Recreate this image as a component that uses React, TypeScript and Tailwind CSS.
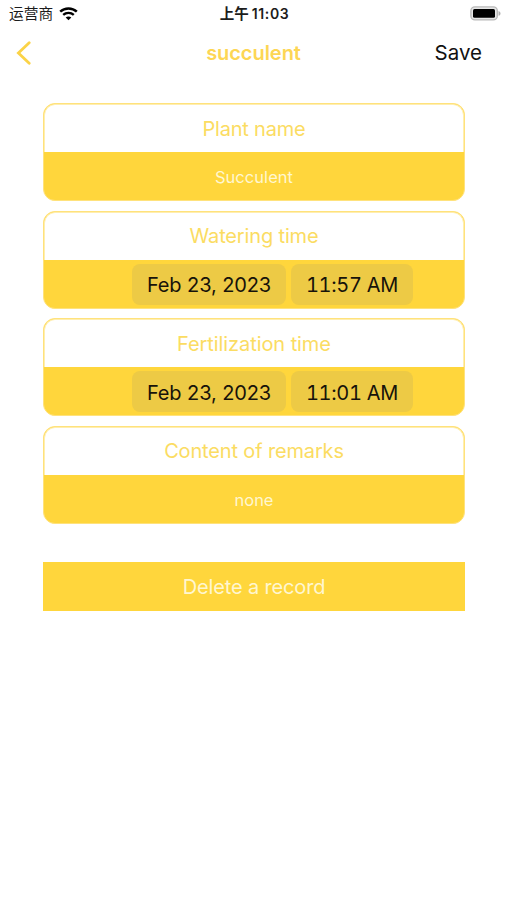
import React from "react";

interface Field {
  label: string;
  labelClass: string;
  value?: string;
  valueClass?: string;
  date?: string;
  time?: string;
}

const fields: Field[] = [
  { label: "Plant name", labelClass: "tracking-[-0.2px]", value: "Succulent", valueClass: "tracking-[0.05px]" },
  { label: "Watering time", labelClass: "tracking-[-0.15px]", date: "Feb 23, 2023", time: "11:57 AM" },
  { label: "Fertilization time", labelClass: "tracking-[-0.08px]", date: "Feb 23, 2023", time: "11:01 AM" },
  { label: "Content of remarks", labelClass: "tracking-[-0.15px]", value: "none", valueClass: "tracking-[-0.05px]" },
];

function StatusBar() {
  return (
    <div className="grid h-[27px] grid-cols-3 items-center pl-[9px] pr-[6px] text-[14px] text-[#1c1c1c]">
      <div className="flex items-center gap-[6px]">
        <span className="whitespace-nowrap text-[14.7px] leading-[20px]">运营商</span>
        <svg width="19" height="14" viewBox="0 0 19 14" fill="none" stroke="#000">
          <path d="M1.2 4.7C5.8.4 13.2.4 17.8 4.7" strokeWidth="2.5" />
          <path d="M4.2 7.9C7.2 5.2 11.8 5.2 14.8 7.9" strokeWidth="2.4" />
          <path d="M9.5 13.2 6.7 10.5C8.2 9.1 10.8 9.1 12.3 10.5Z" fill="#000" stroke="none" />
        </svg>
      </div>
      <div className="flex items-center justify-center gap-[3px] pr-[1px] font-semibold">
        <span className="text-[14.5px] leading-[20px]">上午</span>
        <span className="tracking-[0.65px]">11:03</span>
      </div>
      <div className="flex justify-end">
        <svg width="31" height="15" viewBox="0 0 31 15">
          <rect x="0.9" y="0.9" width="26.4" height="13" rx="4" fill="#e6e6e6" stroke="#b9b9b9" strokeWidth="1.4" />
          <rect x="3" y="3" width="22" height="8.8" rx="1.5" fill="#000" />
          <path d="M28.5 5C31.2 5.8 31.2 9 28.5 9.8Z" fill="#b0b0b0" />
        </svg>
      </div>
    </div>
  );
}

function FieldCard({ label, labelClass, value, valueClass, date, time }: Field) {
  return (
    <div className="flex h-[98px] w-[422px] flex-col overflow-hidden rounded-[12px] border border-[#ffe27c] bg-[#ffd63c]">
      <div className={`flex h-[48px] items-center justify-center rounded-t-[11px] border-x border-t border-[#ffeeb0] bg-white text-[20px] text-[#fbdc62] ${labelClass}`}>
        {label}
      </div>
      {value ? (
        <div className={`flex flex-1 items-center justify-center pt-[3px] text-[16.5px] text-[#fff6d0] ${valueClass}`}>
          {value}
        </div>
      ) : (
        <div className="flex flex-1 items-center gap-[5px] pl-[88px] pt-[1px] text-[20px] text-[#17130a]">
          <span className="flex h-[41px] w-[154px] items-center justify-center rounded-[8px] bg-[#edca45] pt-[2px] tracking-[-0.1px]">
            {date}
          </span>
          <span className="flex h-[41px] w-[122px] items-center justify-center rounded-[8px] bg-[#edca45] pt-[2px] tabular-nums tracking-[-0.3px]">
            {time}
          </span>
        </div>
      )}
    </div>
  );
}

export default function App() {
  return (
    <div className="h-[900px] w-[507px] overflow-hidden bg-white font-['Inter','Noto_Sans_CJK_SC',sans-serif]">
      <StatusBar />

      {/* Navigation bar */}
      <header className="grid h-[51px] grid-cols-3 items-center pl-[16px] pr-[25px]">
        <svg width="15" height="24" viewBox="0 0 15 24" fill="none" stroke="#fbd347" strokeWidth="2.8" strokeLinecap="round">
          <path d="M13.2 1.7 2.4 12 13.2 22.3" />
        </svg>
        <h1 className="pl-[9px] text-center text-[20px] font-semibold tracking-[-0.05px] text-[#fdd654]">succulent</h1>
        <button className="pt-[2px] text-right text-[20.5px] text-[#111]">Save</button>
      </header>

      <main className="px-[43px] pt-[25px]">
        <div className="flex flex-col gap-[9.5px]">
          {fields.map((field) => (
            <FieldCard key={field.label} {...field} />
          ))}
        </div>
        <button className="mt-[38px] h-[49px] w-[422px] bg-[#ffd63c] pt-[2px] text-[20px] tracking-[-0.15px] text-[#fff6d0]">
          Delete a record
        </button>
      </main>
    </div>
  );
}
